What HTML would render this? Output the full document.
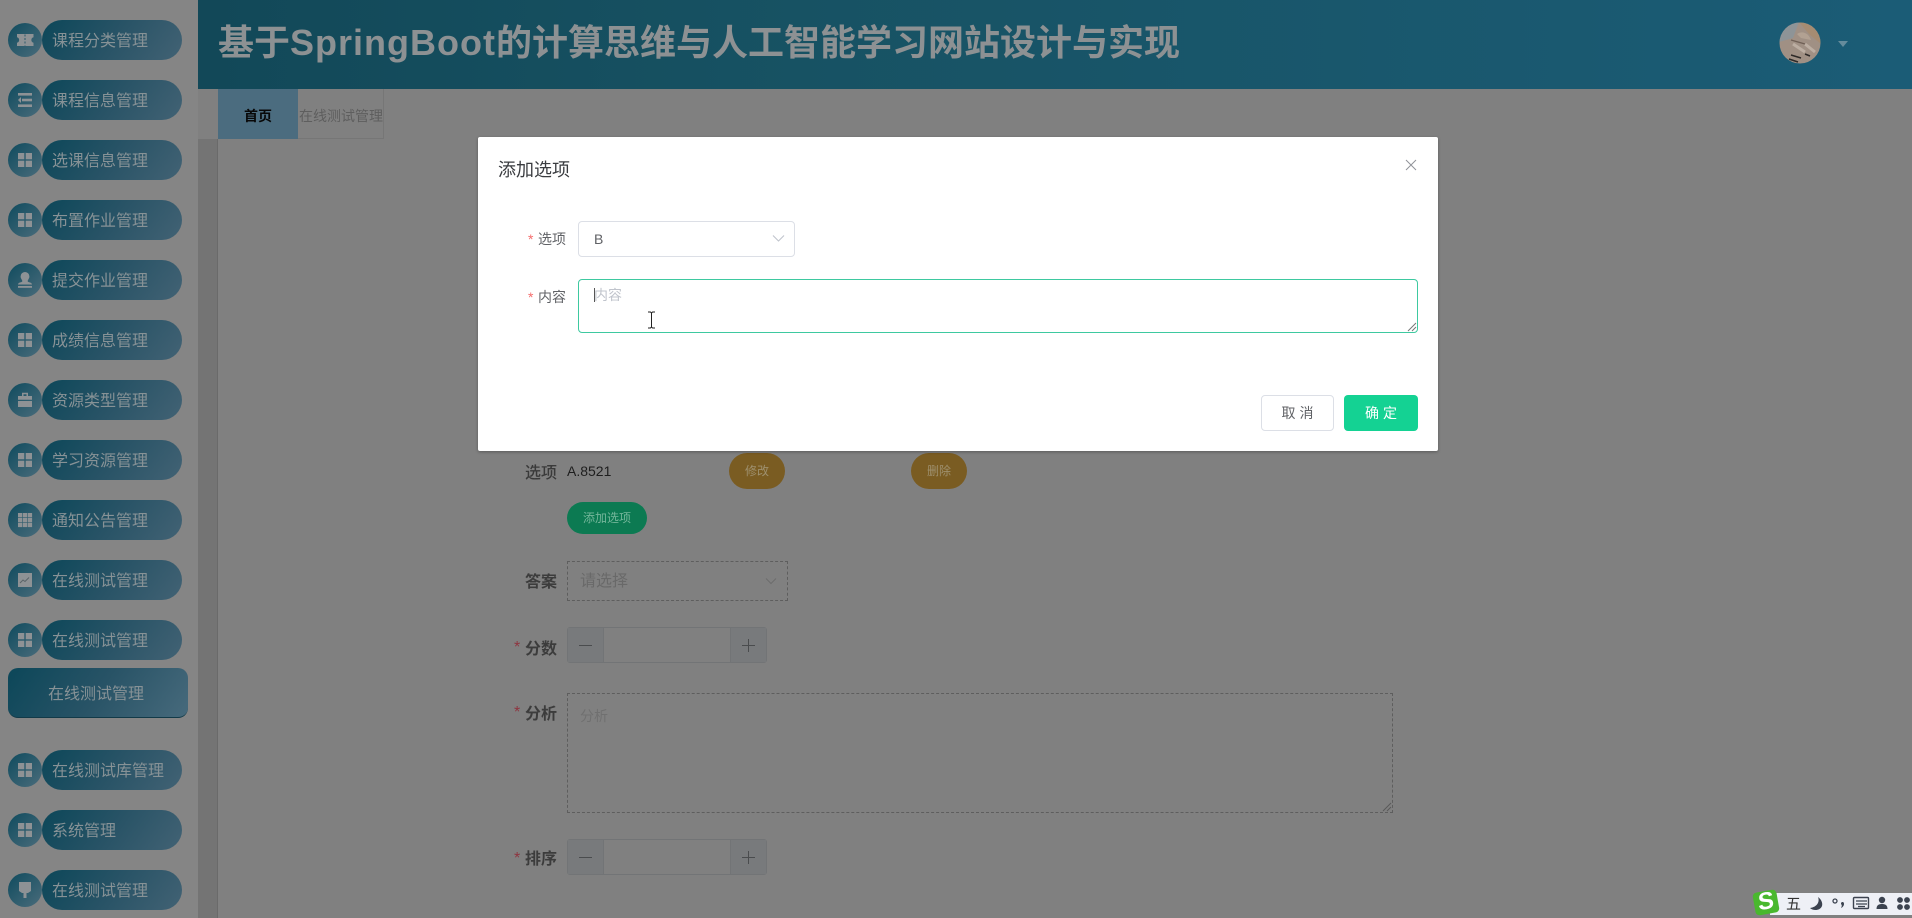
<!DOCTYPE html>
<html lang="zh-CN">
<head>
<meta charset="utf-8">
<title>在线测试管理</title>
<style>
*{box-sizing:border-box}
html,body{margin:0;padding:0;width:1912px;height:918px;overflow:hidden;background:#808080}
body{position:relative;font-family:"Liberation Sans","Noto Sans CJK SC",sans-serif}
.a{position:absolute}
.t{position:absolute;white-space:nowrap}
#side{left:0;top:0;width:198px;height:918px;background:#858585}
.c{position:absolute;left:8px;width:34px;height:34px;border-radius:50%;background:linear-gradient(135deg,#0f4b5e 0%,#4a6c7b 100%)}
.c svg{position:absolute;left:0;top:0;width:34px;height:34px;fill:#8e9295}
.p{position:absolute;left:42px;width:140px;height:40px;border-radius:20px;background:linear-gradient(125deg,#0c4759 0%,#285366 50%,#426274 100%);color:#879296;font-size:16px;line-height:43px;padding-left:10px;white-space:nowrap}
.lb{position:absolute;font-size:16px;font-weight:bold;color:#3c3c3c;line-height:24px;white-space:nowrap}
.st{color:#8e3540;font-weight:normal;font-size:16px}
.num{position:absolute;left:567px;width:200px;height:36px;border:1px solid #727476;border-radius:3px;background:#808080}
.num i{position:absolute;top:0;width:36px;height:34px;background:#787a7c}
.num svg{position:absolute;left:11px;top:11px}
</style>
</head>
<body>
<div id="side" class="a"></div>

<svg width="0" height="0" style="position:absolute">
<defs>
<g id="g4"><rect x="10" y="10" width="6.3" height="6.3"/><rect x="17.7" y="10" width="6.3" height="6.3"/><rect x="10" y="17.7" width="6.3" height="6.3"/><rect x="17.7" y="17.7" width="6.3" height="6.3"/></g>
</defs>
</svg>

<div class="c" style="top:23px"><svg viewBox="0 0 34 34"><path d="M9 11h16.500v3.200a2.900 2.900 0 0 0 0 5.600V23H9v-3.200a2.900 2.900 0 0 0 0-5.600z"/><path d="M17 11.500v11" stroke="#2b5a6c" stroke-width="1" stroke-dasharray="2 1.500"/></svg></div>
<div class="p" style="top:20px">课程分类管理</div>
<div class="c" style="top:83px"><svg viewBox="0 0 34 34"><rect x="10" y="10" width="14" height="2.600"/><rect x="14" y="15.700" width="10" height="2.600"/><rect x="10" y="21.400" width="14" height="2.600"/><path d="M13 14v6l-3-3z"/></svg></div>
<div class="p" style="top:80px">课程信息管理</div>
<div class="c" style="top:143px"><svg viewBox="0 0 34 34"><use href="#g4"/></svg></div>
<div class="p" style="top:140px">选课信息管理</div>
<div class="c" style="top:203px"><svg viewBox="0 0 34 34"><use href="#g4"/></svg></div>
<div class="p" style="top:200px">布置作业管理</div>
<div class="c" style="top:263px"><svg viewBox="0 0 34 34"><path d="M17 9a4.400 4.400 0 0 1 4.400 4.400c0 2-1.200 3-1.700 4.400-.2.700.2 1 1 1.300 1.600.4 3.300.9 3.300 2.400H10c0-1.500 1.700-2 3.300-2.400.8-.3 1.200-.6 1-1.300-.5-1.400-1.700-2.400-1.700-4.400A4.400 4.400 0 0 1 17 9z"/><rect x="10" y="23" width="14" height="1.800"/></svg></div>
<div class="p" style="top:260px">提交作业管理</div>
<div class="c" style="top:323px"><svg viewBox="0 0 34 34"><use href="#g4"/></svg></div>
<div class="p" style="top:320px">成绩信息管理</div>
<div class="c" style="top:383px"><svg viewBox="0 0 34 34"><path d="M14 13v-3.200h6V13h4v3.700H10V13zm1.500 0h3v-1.700h-3zM10 18h14v6H10z"/></svg></div>
<div class="p" style="top:380px">资源类型管理</div>
<div class="c" style="top:443px"><svg viewBox="0 0 34 34"><use href="#g4"/></svg></div>
<div class="p" style="top:440px">学习资源管理</div>
<div class="c" style="top:503px"><svg viewBox="0 0 34 34"><rect x="10" y="10" width="4.300" height="4.300"/><rect x="14.900" y="10" width="4.300" height="4.300"/><rect x="19.800" y="10" width="4.300" height="4.300"/><rect x="10" y="14.900" width="4.300" height="4.300"/><rect x="14.900" y="14.900" width="4.300" height="4.300"/><rect x="19.800" y="14.900" width="4.300" height="4.300"/><rect x="10" y="19.800" width="4.300" height="4.300"/><rect x="14.900" y="19.800" width="4.300" height="4.300"/><rect x="19.800" y="19.800" width="4.300" height="4.300"/></svg></div>
<div class="p" style="top:500px">通知公告管理</div>
<div class="c" style="top:563px"><svg viewBox="0 0 34 34"><rect x="10" y="10" width="14" height="14"/><path d="M12 20l3-3 2 1.500 4-4" fill="none" stroke="#5a6468" stroke-width="1"/></svg></div>
<div class="p" style="top:560px">在线测试管理</div>
<div class="c" style="top:623px"><svg viewBox="0 0 34 34"><use href="#g4"/></svg></div>
<div class="p" style="top:620px">在线测试管理</div>

<div class="a" style="left:8px;top:668px;width:180px;height:50px;border-radius:10px;background:linear-gradient(125deg,#0c4759 0%,#285366 50%,#476a7c 100%);border-bottom:1px solid #123a48"></div>
<div class="t" style="left:48px;top:670px;line-height:50px;font-size:16px;color:#879296">在线测试管理</div>

<div class="c" style="top:753px"><svg viewBox="0 0 34 34"><use href="#g4"/></svg></div>
<div class="p" style="top:750px">在线测试库管理</div>
<div class="c" style="top:813px"><svg viewBox="0 0 34 34"><use href="#g4"/></svg></div>
<div class="p" style="top:810px">系统管理</div>
<div class="c" style="top:873px"><svg viewBox="0 0 34 34"><path d="M11 9h12v9l-3 2h-1.500v5h-3v-5H14l-3-2z"/></svg></div>
<div class="p" style="top:870px">在线测试管理</div>

<!-- header -->
<div class="a" style="left:198px;top:0;width:1714px;height:89px;background:linear-gradient(90deg,#124858 0%,#175263 35%,#1b5c76 100%)"></div>
<div class="t" style="left:218px;top:18px;font-size:36px;line-height:50px;font-weight:bold;color:#8d9193">基于<span style="letter-spacing:1px">SpringBoot</span>的计算思维与人工智能学习网站设计与实现</div>
<svg class="a" style="left:1779px;top:22px" width="42" height="42" viewBox="0 0 42 42">
<defs><clipPath id="av"><circle cx="21" cy="21" r="20.500"/></clipPath></defs>
<g clip-path="url(#av)">
<rect width="42" height="42" fill="#a09084"/>
<path d="M0 0h20L14 16 0 20z" fill="#8e9497"/>
<path d="M20 0h22v22L30 12z" fill="#a68c72"/>
<path d="M18 12c6-4 12 0 14 6l-10-2z" fill="#b2a192"/>
<path d="M10 37l9 3M12 33l10 3M26 32l5 2" stroke="#2e2a28" stroke-width="1.500" fill="none"/>
<path d="M14 22l12 8M26 22l10 8" stroke="#bcaea2" stroke-width="3" fill="none"/>
<path d="M12 18l14 4" stroke="#6f5f55" stroke-width="1.200"/>
</g></svg>
<div class="a" style="left:1838px;top:41px;width:0;height:0;border-left:5px solid transparent;border-right:5px solid transparent;border-top:6px solid #668c9c"></div>

<!-- tabs -->
<div class="a" style="left:218px;top:89px;width:80px;height:50px;background:#4b6c7f"></div>
<div class="t" style="left:218px;top:91px;width:80px;text-align:center;line-height:50px;font-size:14px;font-weight:bold;color:#080808">首页</div>
<div class="a" style="left:298px;top:89px;width:86px;height:50px;border:1px solid #767676;border-left:0;border-top:0"></div>
<div class="t" style="left:299px;top:91px;line-height:50px;font-size:14px;color:#5e5e5e">在线测试管理</div>

<!-- main -->
<div class="a" style="left:198px;top:139px;width:20px;height:779px;background:#747474;border-right:1px solid #6a6a6a"></div>

<!-- form behind modal -->
<div class="lb" style="left:525px;top:462px;color:#3a3a3a;font-weight:500">选项</div>
<div class="t" style="left:567px;top:461px;font-size:14px;line-height:20px;color:#1e1e1e">A.8521</div>
<div class="a" style="left:729px;top:453px;width:56px;height:36px;border-radius:18px;background:#7a5c22"></div>
<div class="t" style="left:729px;top:453px;width:56px;text-align:center;line-height:36px;font-size:12px;color:#9e906e">修改</div>
<div class="a" style="left:911px;top:453px;width:56px;height:36px;border-radius:18px;background:#7a5c22"></div>
<div class="t" style="left:911px;top:453px;width:56px;text-align:center;line-height:36px;font-size:12px;color:#9e906e">删除</div>
<div class="a" style="left:567px;top:502px;width:80px;height:32px;border-radius:16px;background:#0c7a52"></div>
<div class="t" style="left:567px;top:502px;width:80px;text-align:center;line-height:32px;font-size:12px;color:#74b69a">添加选项</div>

<div class="lb" style="left:525px;top:571px">答案</div>
<div class="a" style="left:567px;top:561px;width:221px;height:40px;border:1px dashed #5e5e5e"></div>
<div class="t" style="left:580px;top:570px;font-size:16px;line-height:24px;color:#696969">请选择</div>
<svg class="a" style="left:765px;top:577px" width="12" height="8" viewBox="0 0 12 8"><path d="M1 1.500l5 5 5-5" fill="none" stroke="#6c6c6c" stroke-width="1"/></svg>

<div class="lb" style="left:514px;top:636px"><span class="st">*</span></div>
<div class="lb" style="left:525px;top:638px">分数</div>
<div class="num" style="top:627px"><i style="left:0;border-right:1px solid #727476"><svg width="13" height="13" viewBox="0 0 13 13"><path d="M0 6.500h13" stroke="#4a4c4e" stroke-width="1"/></svg></i><i style="right:0;border-left:1px solid #727476"><svg width="13" height="13" viewBox="0 0 13 13"><path d="M0 6.500h13M6.500 0v13" stroke="#4a4c4e" stroke-width="1"/></svg></i></div>

<div class="lb" style="left:514px;top:701px"><span class="st">*</span></div>
<div class="lb" style="left:525px;top:703px">分析</div>
<div class="a" style="left:567px;top:693px;width:826px;height:120px;border:1px dashed #5e5e5e"></div>
<div class="t" style="left:580px;top:706px;font-size:14px;line-height:20px;color:#707070">分析</div>
<svg class="a" style="left:1382px;top:802px" width="10" height="10" viewBox="0 0 10 10"><path d="M1 9l8-8M5 9l4-4" stroke="#5a5a5a" stroke-width="1"/></svg>

<div class="lb" style="left:514px;top:847px"><span class="st">*</span></div>
<div class="lb" style="left:525px;top:848px">排序</div>
<div class="num" style="top:839px"><i style="left:0;border-right:1px solid #727476"><svg width="13" height="13" viewBox="0 0 13 13"><path d="M0 6.500h13" stroke="#4a4c4e" stroke-width="1"/></svg></i><i style="right:0;border-left:1px solid #727476"><svg width="13" height="13" viewBox="0 0 13 13"><path d="M0 6.500h13M6.500 0v13" stroke="#4a4c4e" stroke-width="1"/></svg></i></div>

<!-- modal -->
<div class="a" style="left:478px;top:137px;width:960px;height:314px;background:#fff;border-radius:2px;box-shadow:0 1px 3px rgba(0,0,0,.3)"></div>
<div class="t" style="left:498px;top:157px;font-size:18px;line-height:26px;color:#3a3c40">添加选项</div>
<svg class="a" style="left:1405px;top:159px" width="12" height="12" viewBox="0 0 12 12"><path d="M1 1l10 10M11 1L1 11" stroke="#909399" stroke-width="1"/></svg>

<div class="t" style="left:528px;top:228px;font-size:14px;line-height:22px;color:#606266"><span style="color:#f56c6c">*</span></div>
<div class="t" style="left:538px;top:228px;font-size:14px;line-height:22px;color:#606266">选项</div>
<div class="a" style="left:578px;top:221px;width:217px;height:36px;border:1px solid #dcdfe6;border-radius:4px;background:#fff"></div>
<div class="t" style="left:594px;top:221px;font-size:14px;line-height:36px;color:#606266">B</div>
<svg class="a" style="left:772px;top:234px" width="13" height="9" viewBox="0 0 13 9"><path d="M1 1.500l5.500 5.500L12 1.500" fill="none" stroke="#c0c4cc" stroke-width="1.100"/></svg>

<div class="t" style="left:528px;top:286px;font-size:14px;line-height:22px;color:#606266"><span style="color:#f56c6c">*</span></div>
<div class="t" style="left:538px;top:286px;font-size:14px;line-height:22px;color:#606266">内容</div>
<div class="a" style="left:578px;top:279px;width:840px;height:54px;border:1px solid #3ec9a0;border-radius:4px;background:#fff"></div>
<div class="t" style="left:594px;top:285px;font-size:14px;line-height:20px;color:#c0c4cc">内容</div>
<div class="a" style="left:594px;top:288px;width:1px;height:14px;background:#555"></div>
<svg class="a" style="left:1407px;top:322px" width="10" height="10" viewBox="0 0 10 10"><path d="M1 9l8-8M5 9l4-4" stroke="#777" stroke-width="1"/></svg>
<svg class="a" style="left:647px;top:311px" width="9" height="18" viewBox="0 0 9 18"><path d="M1 1h2.500l1 1 1-1H8M4.500 2v14M1 17h2.500l1-1 1 1H8" fill="none" stroke="#222" stroke-width="1"/></svg>

<div class="a" style="left:1261px;top:395px;width:73px;height:36px;border:1px solid #dcdfe6;border-radius:4px;background:#fff"></div>
<div class="t" style="left:1261px;top:395px;width:73px;text-align:center;line-height:36px;font-size:14px;letter-spacing:4px;color:#606266;text-indent:4px">取消</div>
<div class="a" style="left:1344px;top:395px;width:74px;height:36px;border-radius:4px;background:#14d293"></div>
<div class="t" style="left:1344px;top:395px;width:74px;text-align:center;line-height:36px;font-size:14px;letter-spacing:4px;color:#fff;text-indent:4px">确定</div>

<!-- IME bar -->
<div class="a" style="left:1770px;top:893px;width:142px;height:22px;background:#eef0f6"></div>
<div class="a" style="left:1754px;top:891px;width:24px;height:23px;background:#49b82e;border-radius:4px;transform:rotate(-10deg)"></div>
<div class="t" style="left:1754px;top:890px;width:24px;text-align:center;font-size:24px;line-height:24px;font-weight:bold;color:#fff;transform:rotate(-10deg) skewX(-6deg)">S</div>
<div class="t" style="left:1786px;top:894px;font-size:15px;line-height:21px;color:#333">五</div>
<svg class="a" style="left:1808px;top:894px" width="104" height="20" viewBox="0 0 104 20">
<path d="M10 3c2 5-1 10-8 11 3 3 10 3 12-2 1-3-1-7-4-9z" fill="#3c4350"/>
<circle cx="27" cy="7" r="2" fill="none" stroke="#3c4350" stroke-width="1.300"/>
<path d="M35 8c2 1 1 5-2 6 1-2 1-3 0-4 0-2 1-2 2-2z" fill="#3c4350"/>
<rect x="45.500" y="3.500" width="15" height="11" rx="1" fill="none" stroke="#3c4350" stroke-width="1.400"/>
<path d="M48 7h11M48 10h11M50 12.500h7" stroke="#3c4350" stroke-width="1.200"/>
<circle cx="74" cy="6" r="3.200" fill="#3c4350"/>
<path d="M68.500 15c0-4 2.500-5 5.500-5s5.500 1 5.500 5z" fill="#3c4350"/>
<circle cx="92" cy="6" r="2.900" fill="#3c4350"/><circle cx="99" cy="6" r="2.900" fill="#3c4350"/><circle cx="92" cy="13" r="2.900" fill="#3c4350"/><circle cx="99" cy="13" r="2.900" fill="#3c4350"/>
</svg>
</body>
</html>
